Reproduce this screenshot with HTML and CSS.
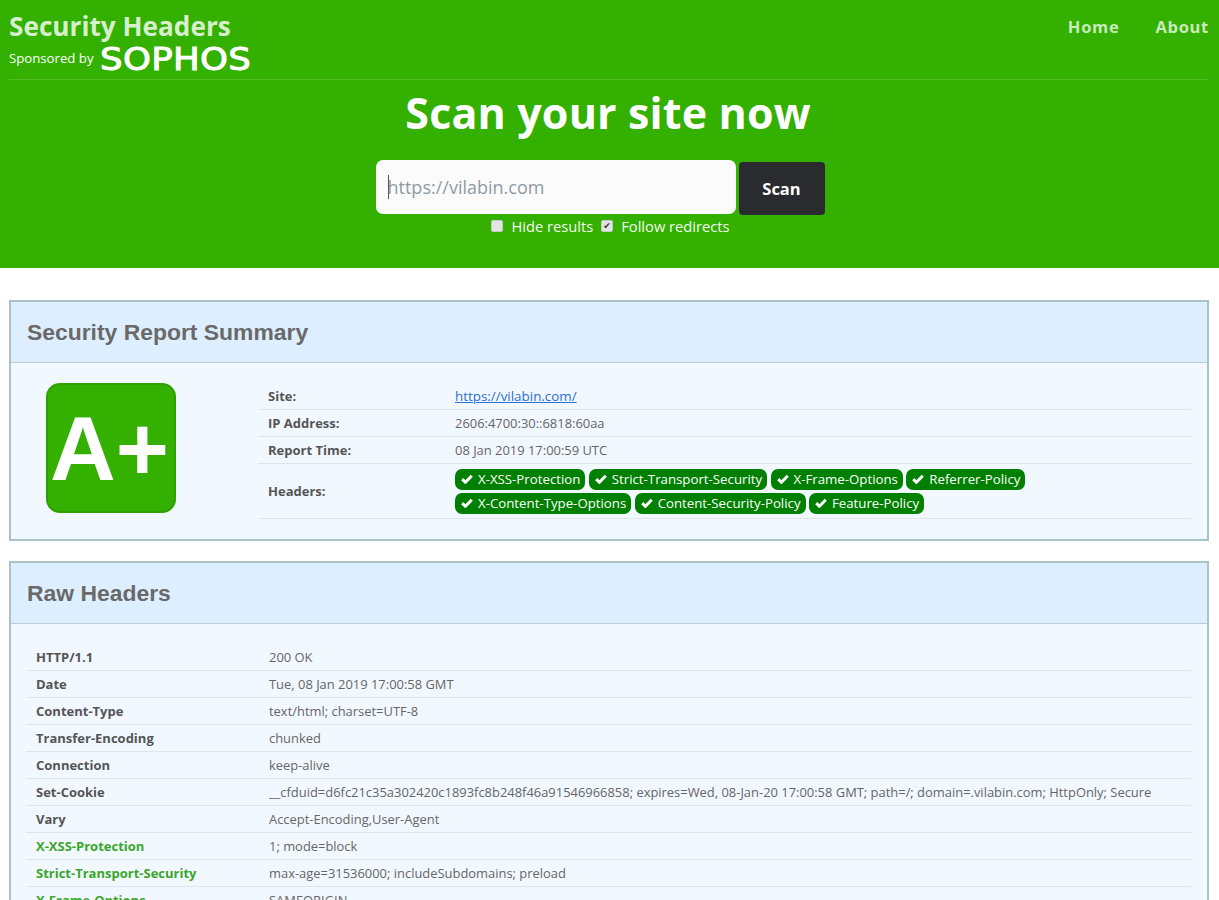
FILE: index.html
```html
<!DOCTYPE html>
<html lang="en">
  <head>
    <meta charset="UTF-8" />
    <title>Security Headers</title>
    <link rel="stylesheet" href="styles.css">
  </head>

  <body>
    <header class="top">
      <div class="nav">
        <div class="brand">
          <a class="brand-name">Security Headers</a>
          <div class="sponsor">
            <span class="sponsor-by">Sponsored by</span>
            <span class="sophos">SOPHOS</span>
          </div>
        </div>
        <div class="menu">
          <a>Home</a>
          <a>About</a>
        </div>
      </div>
      <h1 class="heading">Scan your site now</h1>
      <form class="scan">
        <div class="scan-row">
          <div class="scan-input"><span class="caret"></span>https://vilabin.com</div>
          <button class="scan-btn" type="button">Scan</button>
        </div>
        <div class="scan-opts">
          <input class="checkb" type="checkbox" id="hide" />
          <label for="hide">Hide results</label>
          <input class="checkb" type="checkbox" id="follow" checked />
          <label for="follow">Follow redirects</label>
        </div>
      </form>
    </header>

    <section class="box">
      <h2 class="box-title">Security Report Summary</h2>
      <div class="summary">
        <div class="grade-wrap">
          <div class="grade">A+</div>
        </div>
        <table class="info">
          <tr>
            <th>Site:</th>
            <td><a class="site-link">https://vilabin.com/</a></td>
          </tr>
          <tr>
            <th>IP Address:</th>
            <td>2606:4700:30::6818:60aa</td>
          </tr>
          <tr>
            <th>Report Time:</th>
            <td>08 Jan 2019 17:00:59 UTC</td>
          </tr>
          <tr>
            <th>Headers:</th>
            <td class="pills">
              <span class="pill"><svg class="tick" viewBox="0 0 12 10"><path d="M1.2 5.2 4.4 8.3 10.8 1.8" /></svg>X-XSS-Protection</span>
              <span class="pill"><svg class="tick" viewBox="0 0 12 10"><path d="M1.2 5.2 4.4 8.3 10.8 1.8" /></svg>Strict-Transport-Security</span>
              <span class="pill"><svg class="tick" viewBox="0 0 12 10"><path d="M1.2 5.2 4.4 8.3 10.8 1.8" /></svg>X-Frame-Options</span>
              <span class="pill"><svg class="tick" viewBox="0 0 12 10"><path d="M1.2 5.2 4.4 8.3 10.8 1.8" /></svg>Referrer-Policy</span>
              <span class="pill"><svg class="tick" viewBox="0 0 12 10"><path d="M1.2 5.2 4.4 8.3 10.8 1.8" /></svg>X-Content-Type-Options</span>
              <span class="pill"><svg class="tick" viewBox="0 0 12 10"><path d="M1.2 5.2 4.4 8.3 10.8 1.8" /></svg>Content-Security-Policy</span>
              <span class="pill"><svg class="tick" viewBox="0 0 12 10"><path d="M1.2 5.2 4.4 8.3 10.8 1.8" /></svg>Feature-Policy</span>
            </td>
          </tr>
        </table>
      </div>
    </section>

    <section class="box">
      <h2 class="box-title">Raw Headers</h2>
      <div class="raw">
        <table class="info">
          <tr><th>HTTP/1.1</th><td>200 OK</td></tr>
          <tr><th>Date</th><td>Tue, 08 Jan 2019 17:00:58 GMT</td></tr>
          <tr><th>Content-Type</th><td>text/html; charset=UTF-8</td></tr>
          <tr><th>Transfer-Encoding</th><td>chunked</td></tr>
          <tr><th>Connection</th><td>keep-alive</td></tr>
          <tr><th>Set-Cookie</th><td>__cfduid=d6fc21c35a302420c1893fc8b248f46a91546966858; expires=Wed, 08-Jan-20 17:00:58 GMT; path=/; domain=.vilabin.com; HttpOnly; Secure</td></tr>
          <tr><th>Vary</th><td>Accept-Encoding,User-Agent</td></tr>
          <tr><th class="good">X-XSS-Protection</th><td>1; mode=block</td></tr>
          <tr><th class="good">Strict-Transport-Security</th><td>max-age=31536000; includeSubdomains; preload</td></tr>
          <tr><th class="good">X-Frame-Options</th><td>SAMEORIGIN</td></tr>
        </table>
      </div>
    </section>
  </body>
</html>
```

FILE: styles.css
```css
* {
  box-sizing: border-box;
}

html,
body {
  height: 900px;
  overflow: hidden;
}

body {
  margin: 0;
  background-color: #fff;
  font-family: "Open Sans", sans-serif;
  font-size: 13px;
  color: #666;
}

.top {
  height: 268px;
  padding: 0 10px 0 9px;
  background-color: #33b000;
  margin-bottom: 32px;
}

.nav {
  display: flex;
  justify-content: space-between;
  height: 80px;
  border-bottom: 1px solid #52bc2a;
}

.brand-name {
  display: block;
  margin-top: 9px;
  font-size: 26.2px;
  line-height: 35px;
  font-weight: 700;
  color: #d6efcc;
}

.sponsor {
  display: flex;
  align-items: center;
  height: 28px;
}

.sponsor-by {
  font-size: 13.2px;
  color: #fff;
  width: 91px;
}

.sophos {
  margin-top: 2px;
  font-family: "DejaVu Sans", sans-serif;
  font-size: 32px;
  line-height: 28px;
  letter-spacing: 0.3px;
  color: #fff;
  -webkit-text-stroke: 1px #fff;
  transform: scaleX(1.11);
  transform-origin: left center;
}

.menu {
  display: flex;
  gap: 36px;
  padding-top: 15px;
  font-size: 16.5px;
  font-weight: 700;
  letter-spacing: 0.7px;
  color: #c9eabc;
}

.heading {
  margin: 5px 0 0;
  padding-right: 2px;
  text-align: center;
  font-size: 43px;
  line-height: 55px;
  font-weight: 700;
  letter-spacing: 0.15px;
  color: #fff;
}

.scan {
  margin-top: 20px;
}

.scan-row {
  display: flex;
  justify-content: center;
  align-items: flex-start;
  gap: 3px;
  padding-right: 18px;
}

.scan-input {
  position: relative;
  width: 360px;
  height: 54px;
  padding-left: 12px;
  background-color: #fbfbfb;
  border-radius: 7px;
  font-size: 18px;
  line-height: 54px;
  color: #8e9ba3;
}

.caret {
  position: absolute;
  left: 12px;
  top: 15px;
  width: 1px;
  height: 24px;
  background-color: #555;
}

.scan-btn {
  width: 86px;
  height: 53px;
  margin-top: 2px;
  border: 0;
  border-radius: 4px;
  background-color: #292b2f;
  color: #fff;
  font-family: "Open Sans", sans-serif;
  font-size: 16.5px;
  font-weight: 700;
}

.scan-opts {
  display: flex;
  justify-content: center;
  align-items: center;
  margin-top: 1px;
  padding-left: 11px;
  font-size: 14.7px;
  line-height: 20px;
  color: #f4fbf0;
}

.scan-opts label {
  margin-left: 8px;
  margin-right: 8px;
}

.checkb {
  appearance: none;
  position: relative;
  width: 12px;
  height: 12px;
  margin: 0;
  border: 1px solid #c4cac4;
  border-radius: 2px;
  background-color: #e2e4e4;
}

.checkb:checked::after {
  content: "\2714";
  position: absolute;
  left: 1px;
  top: -1px;
  font-family: "DejaVu Sans", sans-serif;
  font-size: 9px;
  line-height: 12px;
  color: #333;
}

.box {
  margin: 0 10px 20px 9px;
  border: 2px solid #a9c3c9;
  background-color: #f2f8ff;
}

.box-title {
  margin: 0;
  height: 61px;
  padding-left: 16px;
  background-color: #ddeeff;
  border-bottom: 1px solid #b9cdd6;
  font-family: "Liberation Sans", sans-serif;
  font-size: 22.9px;
  line-height: 61px;
  font-weight: 700;
  color: #696969;
}

.summary {
  display: flex;
  height: 176px;
  padding: 19px 16px 0 0;
}

.grade-wrap {
  width: 247px;
  padding: 1px 0 0 35px;
}

.grade {
  width: 130px;
  height: 130px;
  padding-right: 3px;
  background-color: #33b000;
  border: 2px solid #2fa000;
  border-radius: 14px;
  font-family: "Liberation Sans", sans-serif;
  font-size: 91px;
  line-height: 128px;
  font-weight: 700;
  text-align: center;
  color: #fff;
}

.info {
  flex: 1;
  width: 100%;
  border-collapse: collapse;
}

.info th,
.info td {
  height: 27px;
  padding: 0 10px;
  text-align: left;
  vertical-align: middle;
  border-bottom: 1px solid #dfe5ea;
  font-size: 12.93px;
}

.info th {
  font-size: 13px;
  font-weight: 700;
  color: #555;
}

.info tr:first-child th,
.info tr:first-child td {
  padding-top: 1px;
}

.summary .info th {
  width: 187px;
}

.summary .info {
  height: 136px;
}

.site-link {
  font-size: 13.4px;
  color: #2a6fd6;
  text-decoration: underline;
}

.info td.pills {
  height: 55px;
  padding-top: 2px;
  padding-right: 160px;
  line-height: 24px;
}

.pill {
  display: inline-block;
  height: 21px;
  margin-top: 1px;
  padding: 0 5px 0 6px;
  border-radius: 7px;
  background-color: #008000;
  color: #fff;
  font-size: 13.25px;
  line-height: 21px;
  vertical-align: top;
}

.tick {
  width: 12px;
  height: 10px;
  margin-right: 5px;
  fill: none;
  stroke: #fff;
  stroke-width: 3;
}

.raw {
  padding: 19px 16px 0 15px;
}

.raw .info {
  table-layout: fixed;
}

.raw .info th {
  width: 233px;
}

.raw .info td {
  white-space: nowrap;
}

.info th.good {
  color: #3aa62a;
}
```
